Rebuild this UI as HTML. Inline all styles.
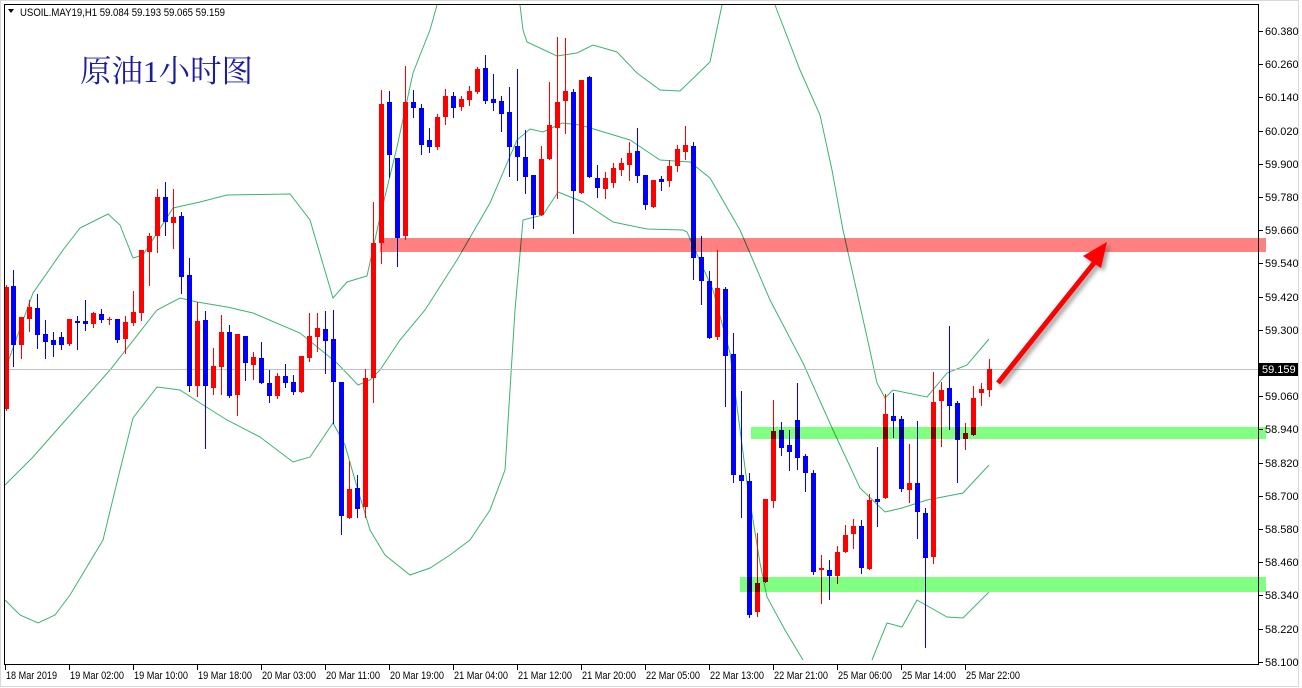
<!DOCTYPE html>
<html><head><meta charset="utf-8"><style>
html,body{margin:0;padding:0;background:#fff;}
body{width:1302px;height:688px;overflow:hidden;position:relative;font-family:"Liberation Sans",sans-serif;}
svg{position:absolute;left:0;top:0;}
text{font-family:"Liberation Sans",sans-serif;font-size:11px;fill:#000;}
</style></head><body>
<svg width="1302" height="688" viewBox="0 0 1302 688" xmlns="http://www.w3.org/2000/svg">
<rect x="0" y="0" width="1302" height="688" fill="#fff"/>
<rect x="0.5" y="0.5" width="1298" height="686" fill="none" stroke="#d8d8d8"/>
<g fill="none" stroke="#3cb371" stroke-width="1">
<polyline points="5,370 33,293 63,250 80,228 108,214 120,225 133,258 143,255 173,208 200,202 227,195 290,194 310,220 333,298 347,282 367,276 380,217 397,147 413,73 430,30 437,5"/>
<polyline points="520,5 523,30 527,42 557,56 577,53 593,45 617,52 637,73 660,90 680,91 710,62 722,5"/>
<polyline points="775,5 800,70 820,115 832,170 843,230 867,337 877,383 885,398 893,390 927,397 947,373 967,365 989,339"/>
<polyline points="5,485 33,457 63,423 110,370 157,310 180,298 197,302 227,307 253,313 300,333 337,363 358,385 370,380 380,370 400,340 425,310 457,260 490,203 517,140 530,129 543,132 562,123 580,125 597,130 630,140 660,160 690,162 710,178 740,230 770,300 803,363 833,430 860,488 885,512 902,508 927,500 963,493 989,465"/>
<polyline points="5,600 20,615 38,623 55,615 70,595 103,540 120,470 133,418 157,387 180,390 200,403 227,420 260,437 293,462 310,457 333,423 345,445 355,480 370,530 385,555 410,575 430,568 450,555 470,540 490,510 505,470 515,310 523,220 543,215 558,192 583,202 613,222 647,229 683,230 687,232 713,290 730,353 747,483 760,563 767,597 785,630 803,660"/>
<polyline points="872,660 887,623 902,627 917,600 947,617 963,618 989,592"/>
</g>
<line x1="4" y1="369.5" x2="1259" y2="369.5" stroke="#c0c0c0"/>
<g id="candles"></g>
<rect x="380" y="238" width="886" height="14" fill="#ff8080" style="mix-blend-mode:multiply"/>
<rect x="751" y="427" width="515" height="12" fill="#80ff80" style="mix-blend-mode:multiply"/>
<rect x="740" y="577" width="526" height="15" fill="#80ff80" style="mix-blend-mode:multiply"/>
<defs><filter id="sh" x="-20%" y="-20%" width="140%" height="140%"><feGaussianBlur stdDeviation="2"/></filter></defs>
<g transform="translate(3,3)" opacity="0.55" filter="url(#sh)">
<line x1="998" y1="383" x2="1094" y2="263" stroke="#555" stroke-width="5"/>
<polygon points="1107,242 1083,256 1101,268" fill="#555"/>
</g>
<line x1="998" y1="383" x2="1094" y2="263" stroke="#ff0000" stroke-width="5"/>
<polygon points="1107,242 1083,256 1101,268" fill="#ff0000"/>
<rect x="4.5" y="4.5" width="1254" height="660" fill="none" stroke="#000"/>
<rect x="1266" y="4" width="32" height="661" fill="#fff"/>
<polygon points="8,9 14,9 11,13" fill="#000"/>
<text x="20" y="16" font-size="10" textLength="205" lengthAdjust="spacingAndGlyphs">USOIL.MAY19,H1  59.084 59.193 59.065 59.159</text>
<text x="80" y="82" textLength="173" lengthAdjust="spacingAndGlyphs" style="font-family:'Liberation Serif','Noto Serif CJK SC',serif;font-size:31px;fill:#1c1ca0">原油1小时图</text>
<g id="yaxis"></g>
<rect x="1259" y="363" width="39" height="13" fill="#000"/>
<text x="1262" y="373" style="fill:#fff;font-size:11px">59.159</text>
<g id="xaxis"></g>
</svg>
<script>
var C=[[6,'r',287,409,285,410],[13,'b',286,345,270,366],[21,'r',317,345,317,358],[29,'r',307,319,300,331],[37,'b',308,335,294,348],[45,'b',334,342,320,358],[53,'b',340,345,332,356],[61,'b',337,345,332,349],[69,'r',319,344,319,345],[77,'b',321,323,316,349],[85,'b',321,324,300,330],[93,'r',313,324,312,327],[101,'b',314,320,309,322],[109,'r',319,320,317,324],[117,'b',319,340,319,342],[125,'r',322,339,316,353],[133,'r',312,323,291,325],[141,'r',250,313,250,320],[149,'r',236,252,233,285],[157,'r',197,236,189,252],[165,'b',197,222,182,235],[173,'r',217,223,189,248],[181,'b',216,277,212,293],[189,'b',275,386,258,391],[197,'r',321,386,302,396],[205,'b',320,386,311,448],[213,'r',366,388,348,394],[221,'r',332,367,315,394],[229,'b',332,396,325,397],[237,'r',334,395,334,415],[245,'b',336,363,336,380],[253,'r',357,365,352,379],[261,'b',358,383,342,383],[269,'b',383,396,370,402],[277,'r',376,396,373,398],[285,'b',376,383,364,387],[293,'b',382,392,375,394],[301,'r',356,392,356,392],[309,'r',336,358,313,361],[317,'r',328,337,313,351],[325,'b',329,341,311,373],[333,'b',339,382,310,423],[341,'b',382,516,382,534],[349,'r',489,518,461,518],[357,'b',488,509,475,517],[365,'r',378,507,369,517],[373,'r',243,378,202,402],[381,'r',104,243,90,263],[389,'b',102,155,91,177],[397,'b',158,238,158,266],[405,'r',102,236,66,239],[413,'b',102,108,90,117],[421,'b',108,145,104,154],[429,'b',140,147,128,152],[437,'r',117,147,114,149],[445,'r',96,117,89,124],[453,'b',96,108,92,117],[461,'r',99,107,96,110],[469,'r',91,100,86,105],[477,'r',69,92,67,93],[485,'b',68,101,55,103],[493,'b',99,103,74,110],[501,'b',101,114,96,131],[509,'b',112,147,87,176],[517,'b',146,157,69,180],[525,'b',157,177,130,193],[533,'b',175,215,175,228],[541,'r',159,215,146,215],[549,'r',125,159,82,159],[557,'r',102,128,37,198],[565,'r',91,101,38,133],[573,'b',92,191,89,233],[581,'r',80,193,80,193],[589,'b',77,177,76,177],[597,'b',178,188,165,197],[605,'r',178,189,172,198],[613,'r',168,183,163,187],[621,'r',163,170,158,175],[629,'r',153,165,142,180],[637,'b',151,176,128,182],[645,'b',175,205,175,209],[653,'r',180,207,180,207],[661,'b',179,182,176,190],[669,'r',166,181,160,186],[677,'r',149,166,145,171],[685,'r',145,152,126,159],[693,'b',146,258,142,279],[701,'b',257,281,236,304],[709,'b',281,338,271,338],[717,'r',288,337,250,339],[725,'b',289,356,287,406],[733,'b',354,475,333,482],[741,'b',475,481,391,517],[749,'b',481,615,473,617],[757,'r',583,612,533,616],[765,'r',499,582,499,582],[773,'r',431,501,400,507],[781,'b',430,448,422,455],[789,'b',445,452,430,470],[797,'b',420,458,383,469],[805,'b',456,473,454,491],[813,'b',473,572,470,574],[821,'r',568,570,555,603],[829,'b',570,576,560,599],[837,'r',552,576,546,583],[845,'r',535,552,525,552],[853,'r',526,534,519,548],[861,'b',526,568,520,573],[869,'r',500,569,494,569],[877,'b',499,502,447,526],[885,'r',414,498,394,498],[893,'b',416,421,393,437],[901,'b',419,489,416,491],[909,'r',483,490,444,502],[917,'b',483,512,421,538],[925,'b',513,558,508,647],[933,'r',402,557,372,563],[941,'r',390,401,382,446],[949,'b',388,406,326,429],[957,'b',403,440,401,482],[965,'r',433,439,423,449],[973,'r',398,435,386,435],[981,'r',389,393,383,405],[989,'r',369,390,359,396]];
var NS='http://www.w3.org/2000/svg',g=document.getElementById('candles');
function el(n,a,p){var e=document.createElementNS(NS,n);for(var k in a)e.setAttribute(k,a[k]);p.appendChild(e);return e;}
C.forEach(function(c){var col=c[1]=='r'?'#ff0000':'#0000ff';
el('rect',{x:c[0],y:Math.min(c[4],c[2]),width:1,height:Math.max(c[5],c[3])-Math.min(c[4],c[2])+1,fill:col},g);
el('rect',{x:c[0]-2,y:c[2],width:5,height:Math.max(1,c[3]-c[2]),fill:col},g);});
var ya=document.getElementById('yaxis');
for(var i=0;i<20;i++){var y=31+i*33.2,v=(60.38-i*0.12).toFixed(3);
el('line',{x1:1259,y1:Math.round(y)+0.5,x2:1263,y2:Math.round(y)+0.5,stroke:'#000'},ya);
if(i!=10){var t=el('text',{x:1265,y:Math.round(y)+4,'font-size':'10.5'},ya);t.textContent=v;}}
var L=["18 Mar 2019","19 Mar 02:00","19 Mar 10:00","19 Mar 18:00","20 Mar 03:00","20 Mar 11:00","20 Mar 19:00","21 Mar 04:00","21 Mar 12:00","21 Mar 20:00","22 Mar 05:00","22 Mar 13:00","22 Mar 21:00","25 Mar 06:00","25 Mar 14:00","25 Mar 22:00"];
var xa=document.getElementById('xaxis');
L.forEach(function(s,i){var x=5+i*64;el('line',{x1:x+0.5,y1:665,x2:x+0.5,y2:670,stroke:'#000'},xa);var t=el('text',{x:x+1,y:679,'font-size':'10',textLength:(i==0?51:54),lengthAdjust:'spacingAndGlyphs'},xa);t.textContent=s;});
</script>
</body></html>
